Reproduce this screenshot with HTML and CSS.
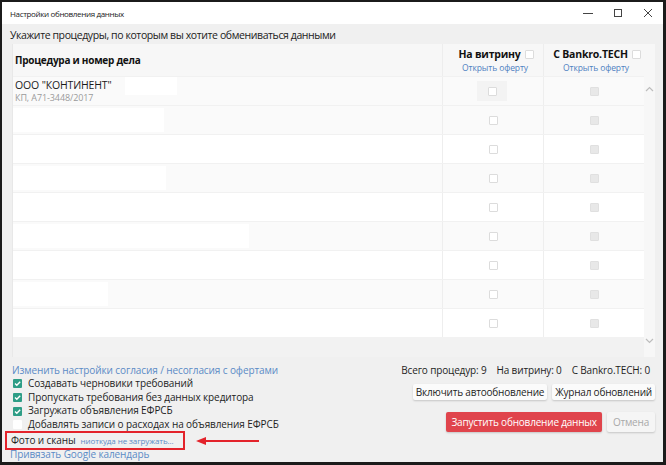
FILE: index.html
```html
<!DOCTYPE html>
<html lang="ru">
<head>
<meta charset="utf-8">
<title>Настройки обновления данных</title>
<link rel="stylesheet" href="styles.css">
</head>
<body>
<div class="window">
  <div class="titlebar">
    <span class="title">Настройки обновления данных</span>
    <div class="controls">
      <svg class="ctl" width="10" height="10" viewBox="0 0 10 10"><path d="M0 5.5h10" stroke="#444" stroke-width="1"/></svg>
      <svg class="ctl" width="10" height="10" viewBox="0 0 10 10"><rect x="1.5" y="1.5" width="7" height="7" fill="none" stroke="#444" stroke-width="1"/></svg>
      <svg class="ctl" width="10" height="10" viewBox="0 0 10 10"><path d="M1 1L9 9M9 1L1 9" stroke="#444" stroke-width="1"/></svg>
    </div>
  </div>
  <div class="body">
    <div class="intro">Укажите процедуры, по которым вы хотите обмениваться данными</div>
    <div class="table">
      <div class="grid">
        <div class="thead">
          <div class="th th-name">Процедура и номер дела</div>
          <div class="th th-opt">
            <div class="th-line">На витрину <span class="cb"></span></div>
            <a class="offer">Открыть оферту</a>
          </div>
          <div class="th th-opt">
            <div class="th-line">С Bankro.TECH <span class="cb"></span></div>
            <a class="offer">Открыть оферту</a>
          </div>
        </div>
        <div class="row alt">
          <div class="cell name">
            <div class="name-main"><span>ООО "КОНТИНЕНТ"</span><span class="mask m1"></span></div>
            <div class="name-sub">КП, А71-3448/2017</div>
          </div>
          <div class="cell chk"><span class="hover"><span class="cb"></span></span></div>
          <div class="cell chk"><span class="cb dis"></span></div>
        </div>
        <div class="row alt"><div class="cell name"><span class="mask" style="width:151px"></span></div><div class="cell chk"><span class="cb"></span></div><div class="cell chk"><span class="cb dis"></span></div></div>
        <div class="row"><div class="cell name"></div><div class="cell chk"><span class="cb"></span></div><div class="cell chk"><span class="cb dis"></span></div></div>
        <div class="row alt"><div class="cell name"><span class="mask" style="width:153px"></span></div><div class="cell chk"><span class="cb"></span></div><div class="cell chk"><span class="cb dis"></span></div></div>
        <div class="row"><div class="cell name"></div><div class="cell chk"><span class="cb"></span></div><div class="cell chk"><span class="cb dis"></span></div></div>
        <div class="row alt"><div class="cell name"><span class="mask" style="width:236px"></span></div><div class="cell chk"><span class="cb"></span></div><div class="cell chk"><span class="cb dis"></span></div></div>
        <div class="row"><div class="cell name"></div><div class="cell chk"><span class="cb"></span></div><div class="cell chk"><span class="cb dis"></span></div></div>
        <div class="row alt"><div class="cell name"><span class="mask" style="width:95px"></span></div><div class="cell chk"><span class="cb"></span></div><div class="cell chk"><span class="cb dis"></span></div></div>
        <div class="row"><div class="cell name"></div><div class="cell chk"><span class="cb"></span></div><div class="cell chk"><span class="cb dis"></span></div></div>
      </div>
      <div class="scrollbar">
        <svg width="9" height="6" viewBox="0 0 9 6"><path d="M1 5L4.5 1.5L8 5" fill="none" stroke="#bdbdbd" stroke-width="1.2"/></svg>
        <svg width="9" height="6" viewBox="0 0 9 6"><path d="M1 1L4.5 4.5L8 1" fill="none" stroke="#bdbdbd" stroke-width="1.2"/></svg>
      </div>
    </div>
    <div class="footer">
      <div class="left">
        <a class="link">Изменить настройки согласия / несогласия с офертами</a>
        <label class="opt"><span class="gcb on"><svg width="9" height="9" viewBox="0 0 9 9"><path d="M2 4.6L3.8 6.3L7.2 2.7" fill="none" stroke="#fff" stroke-width="1.4"/></svg></span>Создавать черновики требований</label>
        <label class="opt"><span class="gcb on"><svg width="9" height="9" viewBox="0 0 9 9"><path d="M2 4.6L3.8 6.3L7.2 2.7" fill="none" stroke="#fff" stroke-width="1.4"/></svg></span>Пропускать требования без данных кредитора</label>
        <label class="opt"><span class="gcb on"><svg width="9" height="9" viewBox="0 0 9 9"><path d="M2 4.6L3.8 6.3L7.2 2.7" fill="none" stroke="#fff" stroke-width="1.4"/></svg></span>Загружать объявления ЕФРСБ</label>
        <label class="opt"><span class="gcb"></span>Добавлять записи о расходах на объявления ЕФРСБ</label>
        <div class="photo"><span class="photo-label">Фото и сканы</span><a class="photo-link">ниоткуда не загружать...</a></div>
        <a class="link google">Привязать Google календарь</a>
      </div>
      <div class="right">
        <div class="stats"><span>Всего процедур: 9</span><span>На витрину: 0</span><span>С Bankro.TECH: 0</span></div>
        <div class="btns">
          <button class="btn">Включить автообновление</button>
          <button class="btn">Журнал обновлений</button>
        </div>
        <div class="btns main">
          <button class="btn primary">Запустить обновление данных</button>
          <button class="btn disabled">Отмена</button>
        </div>
      </div>
    </div>
    <svg class="arrow" width="66" height="12" viewBox="0 0 66 12"><path d="M10 6H64" stroke="#e3232b" stroke-width="2"/><path d="M1 6L11 2V10Z" fill="#e3232b"/></svg>
  </div>
</div>
</body>
</html>
```

FILE: styles.css
```css
* { box-sizing: border-box; }
html, body { margin: 0; padding: 0; }
body {
  width: 666px;
  height: 465px;
  font-family: "Open Sans", "Noto Sans", sans-serif;
  color: #1e1e1e;
  background: #fff;
}
.window {
  width: 666px;
  height: 465px;
  border: 2px solid #1b1b1b;
  border-right-width: 3px;
  border-bottom-width: 3px;
  display: flex;
  flex-direction: column;
  background: #f0f0f0;
}
.titlebar {
  height: 22px;
  flex: none;
  background: #fff;
  display: flex;
  align-items: center;
  justify-content: space-between;
  padding-left: 8px;
}
.title {
  font-size: 8px;
  color: #222;
  letter-spacing: -0.35px;
}
.controls {
  display: flex;
  align-items: center;
  gap: 20px;
  padding-right: 10px;
}
.ctl { display: block; }
.body {
  flex: 1;
  position: relative;
  padding: 4px 8px 0 10px;
  display: flex;
  flex-direction: column;
}
.intro {
  font-size: 10.5px;
  line-height: 14px;
  height: 16px;
  letter-spacing: -0.4px;
  color: #222;
  margin-left: -2px;
}
.table {
  height: 313px;
  display: flex;
  background: #f2f2f2;
  border-left: 1px solid #e8e8e8;
}
.grid {
  flex: 1;
  display: flex;
  flex-direction: column;
}
.thead {
  height: 32px;
  display: grid;
  grid-template-columns: 1fr 101px 101px;
  background: #f7f7f7;
}
.th {
  font-weight: 700;
  font-size: 10.5px;
  letter-spacing: -0.2px;
  color: #111;
}
.th-name {
  display: flex;
  align-items: center;
  padding-left: 2px;
  font-size: 10px;
  letter-spacing: -0.25px;
}
.th-opt {
  display: flex;
  flex-direction: column;
  align-items: center;
  padding-top: 3px;
  border-left: 1px solid #ededed;
}
.th-line {
  display: flex;
  align-items: center;
  gap: 4px;
  line-height: 14px;
  padding-left: 6px;
}
.offer {
  font-weight: 400;
  font-size: 8.5px;
  color: #4f82c2;
  line-height: 14px;
  letter-spacing: -0.1px;
  padding-left: 4px;
}
.cb {
  display: inline-block;
  width: 9px;
  height: 9px;
  border: 1px solid #dcdcdc;
  background: #fff;
  border-radius: 1px;
}
.cb.dis {
  background: #e8e8e8;
  border-color: #e0e0e0;
}
.row {
  height: 29px;
  display: grid;
  grid-template-columns: 1fr 101px 101px;
  background: #fff;
  border-top: 1px solid #f1f1f1;
}
.row.alt { background: #fafafa; }
.cell { height: 100%; }
.cell.name {
  padding-left: 0;
  display: flex;
  flex-direction: column;
  justify-content: center;
  align-items: flex-start;
}
.mask {
  display: block;
  height: 24px;
  background: #fff;
}
.m1 {
  width: 52px;
  height: 18px;
  margin-left: 13px;
  margin-top: -2px;
  flex: none;
}
.name-main {
  display: flex;
  align-items: flex-start;
  height: 13px;
  font-size: 10.5px;
  line-height: 13px;
  color: #1a1a1a;
  padding-left: 2px;
  letter-spacing: -0.15px;
}
.name-sub {
  font-size: 9px;
  line-height: 12px;
  color: #9a9a9a;
  padding-left: 2px;
  letter-spacing: -0.1px;
}
.cell.chk {
  display: flex;
  align-items: center;
  justify-content: center;
  border-left: 1px solid #eeeeee;
}
.hover {
  width: 30px;
  height: 20px;
  background: #f3f3f3;
  display: flex;
  align-items: center;
  justify-content: center;
  margin-left: -2px;
}
.scrollbar {
  width: 11px;
  background: #f7f7f7;
  display: flex;
  flex-direction: column;
  align-items: center;
  justify-content: space-between;
  padding: 42px 0 13px;
}
.scrollbar svg { display: block; }
.footer {
  flex: 1;
  display: flex;
  justify-content: space-between;
  padding-top: 6px;
}
.left {
  display: flex;
  flex-direction: column;
  align-items: flex-start;
  font-size: 10px;
  letter-spacing: -0.1px;
  white-space: nowrap;
}
.link {
  color: #5b8bc6;
  line-height: 14px;
}
.opt {
  display: flex;
  align-items: center;
  gap: 6px;
  line-height: 13.7px;
  height: 13.7px;
  color: #1e1e1e;
  padding-left: 1px;
}
.gcb {
  width: 9px;
  height: 9px;
  border-radius: 1px;
  background: #fff;
  display: flex;
  align-items: center;
  justify-content: center;
}
.gcb.on { background: #2e9d86; }
.photo {
  margin-left: -7px;
  margin-top: -1px;
  height: 19px;
  border: 2px solid #e3232b;
  display: flex;
  align-items: center;
  gap: 5px;
  padding: 0 14px 0 4px;
  width: 180px;
}
.photo-label { color: #1e1e1e; font-size: 10px; }
.photo-link { color: #5b8bc6; font-size: 8px; letter-spacing: -0.1px; }
.google { line-height: 12px; margin-top: -2px; margin-left: -2px; }
.right {
  display: flex;
  flex-direction: column;
  align-items: flex-end;
}
.stats {
  display: flex;
  gap: 10px;
  font-size: 10px;
  line-height: 14px;
  letter-spacing: -0.15px;
  color: #1e1e1e;
  padding-right: 5px;
}
.btns {
  display: flex;
  gap: 5px;
  margin-top: 7px;
}
.btns.main { margin-top: 12px; }
.btn {
  font-family: inherit;
  font-size: 10px;
  letter-spacing: -0.2px;
  color: #1e1e1e;
  background: #fbfbfb;
  border: none;
  border-radius: 2px;
  box-shadow: 0 1px 2px rgba(0,0,0,0.18);
  height: 16px;
  padding: 0 3px;
  line-height: 16px;
  margin: 0;
}
.btn.primary {
  background: #e0444c;
  color: #fff;
  height: 20px;
  padding: 0 5px;
}
.btn.disabled {
  color: #a9a9a9;
  background: #f5f5f5;
  height: 20px;
  padding: 0 6px;
}
.arrow {
  position: absolute;
  left: 193px;
  top: 411px;
}
```
